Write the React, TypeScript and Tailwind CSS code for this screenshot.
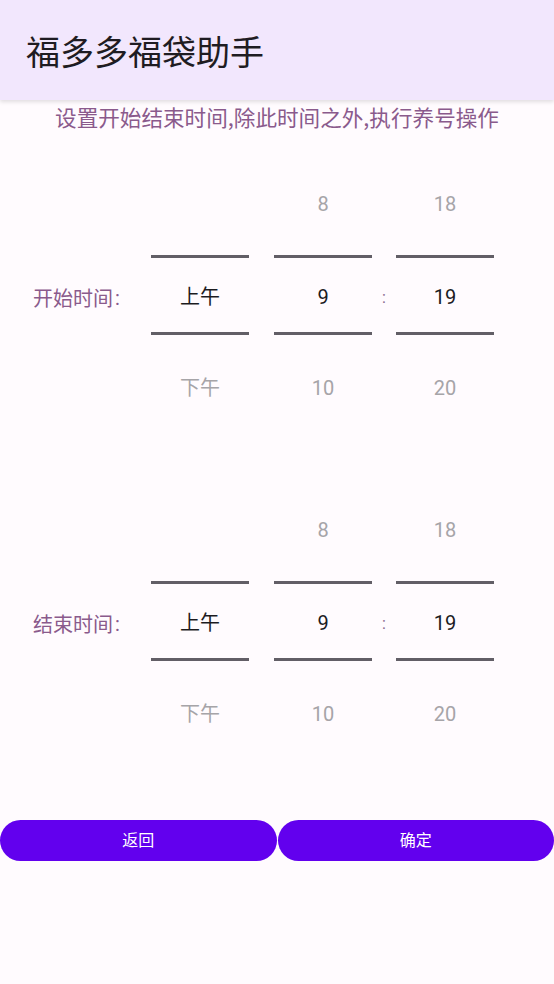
import React from "react";

const FONT = { fontFamily: '"Roboto", "Noto Sans CJK SC", sans-serif' };
const CJK = { fontFamily: '"Noto Sans CJK SC", sans-serif' };

function Wheel({ top, mid, bottom }: { top: string; mid: string; bottom: string }) {
  return (
    <div className="flex w-[98px] flex-col">
      <div className="flex h-[92px] items-center justify-center text-[20px] text-[#a6a4a8]">{top}</div>
      <div className="mt-[5px] flex h-[80px] items-center justify-center border-y-[3px] border-[#625e66] pt-[3px] text-[20px] text-[#1c1b1f]">
        {mid}
      </div>
      <div className="mt-[7px] flex h-[92px] items-center justify-center text-[20px] text-[#a6a4a8]">{bottom}</div>
    </div>
  );
}

function TimePicker({ label }: { label: string }) {
  return (
    <div className="flex items-center">
      <div className="ml-[33px] flex w-[118px] items-center pt-[3px] text-[20px] text-[#8a5a8c]">
        <span style={CJK}>{label}</span>
        <span className="ml-[2px]">:</span>
      </div>
      <Wheel top="" mid="上午" bottom="下午" />
      <div className="w-[25px]" />
      <Wheel top="8" mid="9" bottom="10" />
      <div className="flex w-[24px] justify-center pt-[3px] text-[16px] text-[#8a6a8f]">:</div>
      <Wheel top="18" mid="19" bottom="20" />
    </div>
  );
}

export default function App() {
  return (
    <div className="flex min-h-[984px] w-full flex-col bg-[#fffbfe]" style={FONT}>
      <header className="relative z-10 flex h-[100px] items-center bg-[#f2e7fd] pl-[26px] shadow-[0_2px_4px_rgba(0,0,0,0.12)]">
        <h1 className="text-[34px] font-normal text-[#1f1c22]" style={CJK}>福多多福袋助手</h1>
      </header>

      <p className="mt-[5px] text-center text-[21.6px] leading-[24px] text-[#8a5a8c]" style={CJK}>
        设置开始结束时间,除此时间之外,执行养号操作
      </p>

      <div className="mt-[29px]">
        <TimePicker label="开始时间" />
      </div>
      <div className="mt-[50px]">
        <TimePicker label="结束时间" />
      </div>

      <div className="mt-[60px] flex gap-[1px]">
        <button className="h-[41px] flex-1 rounded-full bg-[#6200ee] text-[16px] text-white">返回</button>
        <button className="h-[41px] flex-1 rounded-full bg-[#6200ee] text-[16px] text-white">确定</button>
      </div>
    </div>
  );
}
